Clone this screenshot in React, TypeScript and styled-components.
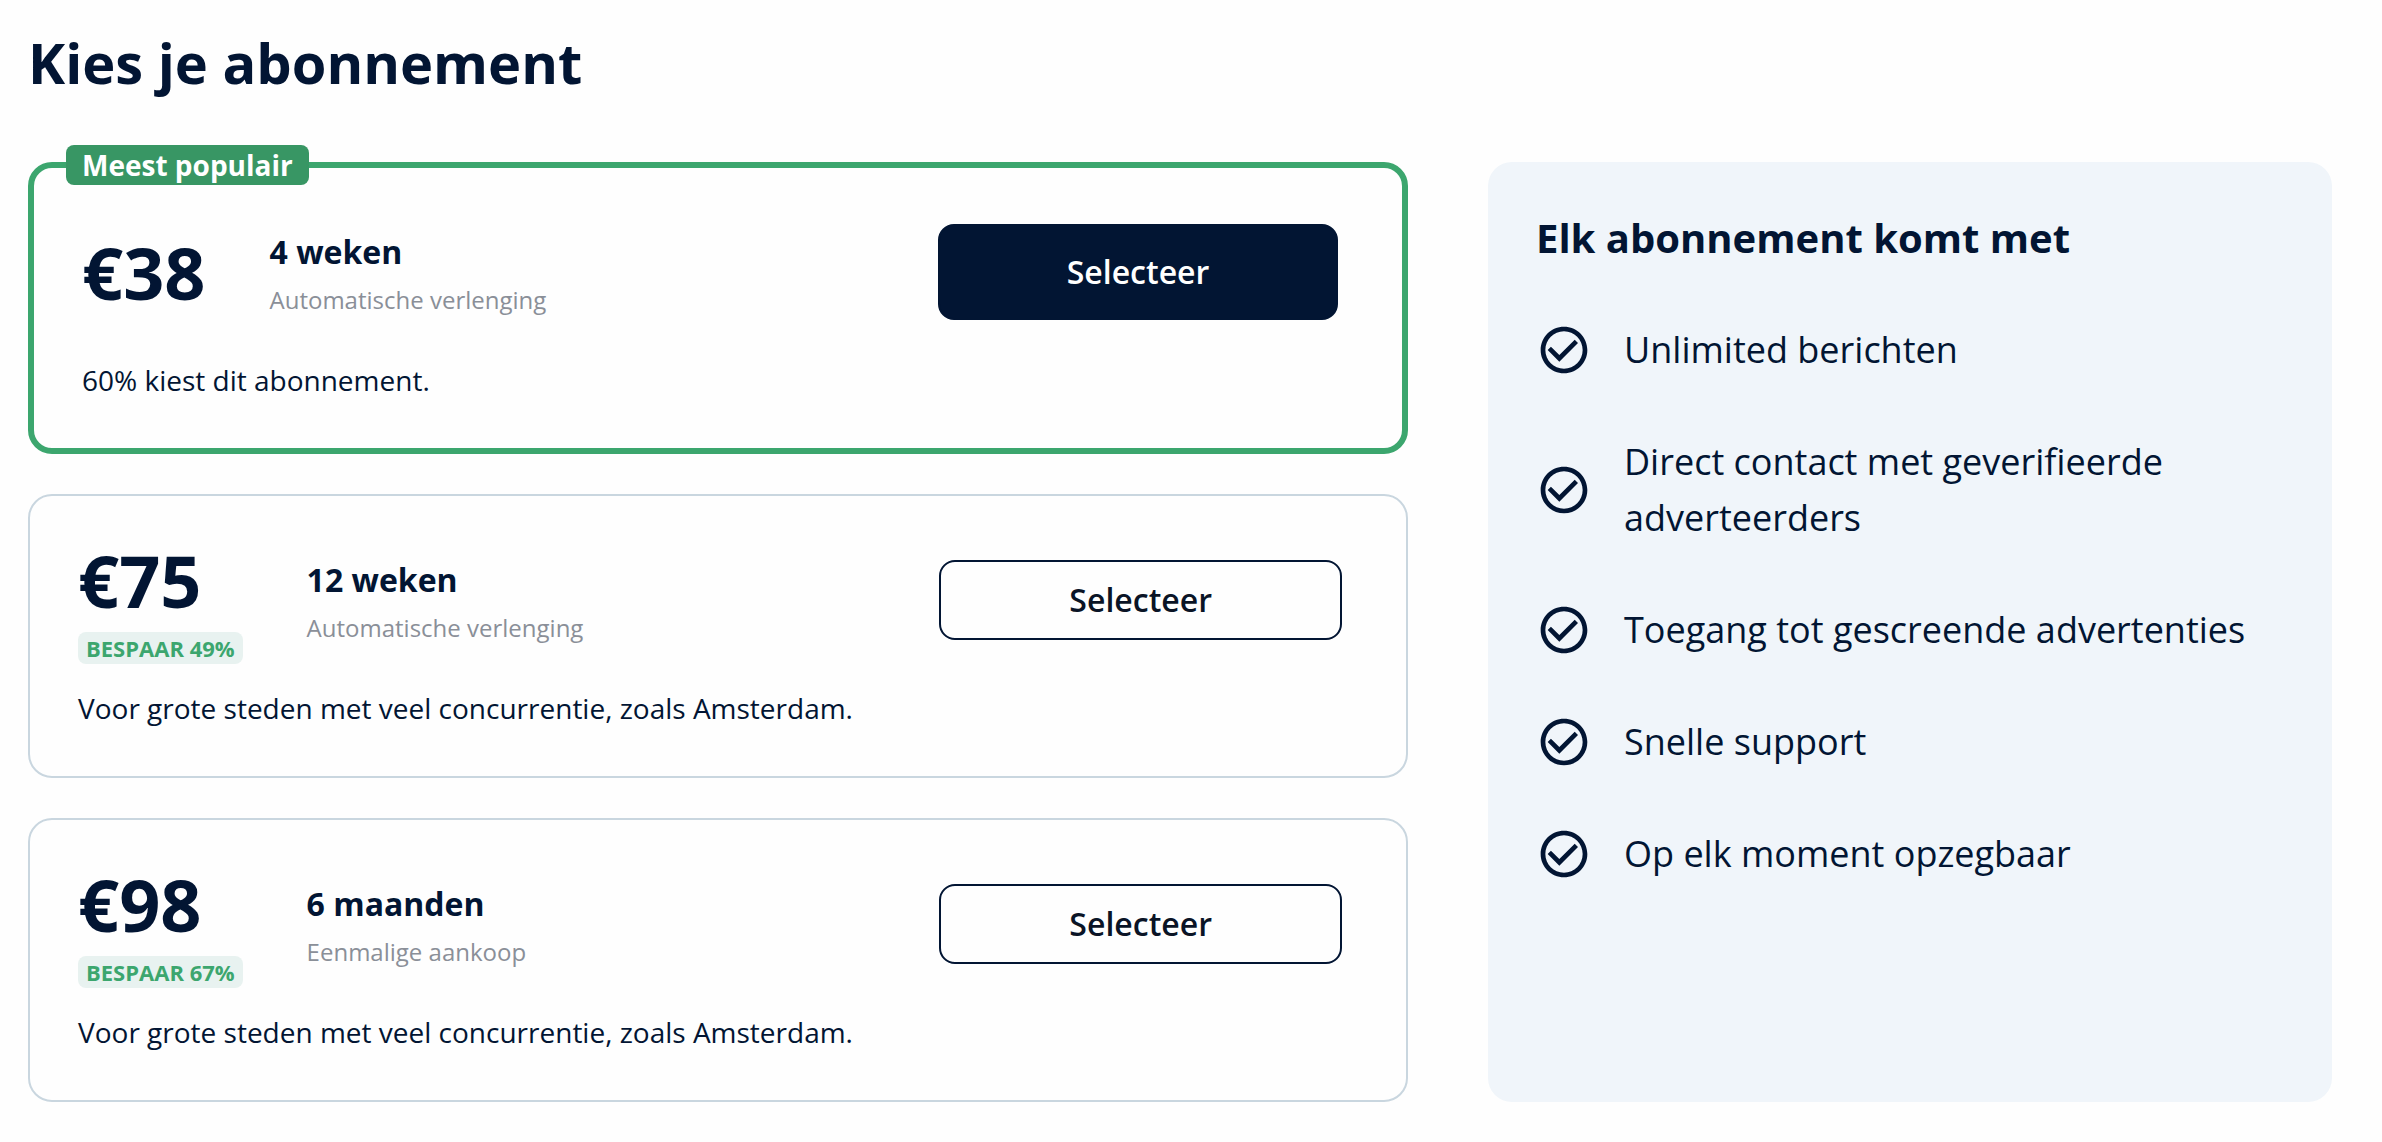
import React from "react";
import styled, { createGlobalStyle, css } from "styled-components";

const navy = "#021533";
const green = "#3ca66e";

const GlobalStyle = createGlobalStyle`
  *, *::before, *::after { box-sizing: border-box; }
  body {
    margin: 0;
    background: #fefefe;
    color: ${navy};
    font-family: "Open Sans", "Noto Sans", sans-serif;
  }
`;

const Page = styled.main`
  padding: 24px 50px 40px 28px;
`;

const Title = styled.h1`
  margin: 0 0 62px;
  font-size: 56px;
  line-height: 76px;
  font-weight: 700;
`;

const Columns = styled.div`
  display: grid;
  grid-template-columns: 345fr 211fr;
  gap: 80px;
`;

const Plans = styled.div`
  display: flex;
  flex-direction: column;
  gap: 40px;
`;

const Card = styled.article<{ $popular?: boolean }>`
  position: relative;
  display: flex;
  flex-direction: column;
  gap: 32px;
  padding: 48px;
  border: ${(p) => (p.$popular ? `6px solid ${green}` : "2px solid #c9d6df")};
  border-radius: 24px;
`;

const PopularBadge = styled.span`
  position: absolute;
  top: -23px;
  left: 32px;
  padding: 0 16px;
  border-radius: 8px;
  background: #389664;
  color: #fff;
  font-size: 28px;
  line-height: 40px;
  font-weight: 700;
`;

const Row = styled.div`
  display: grid;
  grid-template-columns: 2fr 1fr;
  align-items: center;
  min-height: 112px;
`;

const Offer = styled.div`
  display: flex;
  align-items: center;
  gap: 64px;
`;

const Cost = styled.div`
  display: flex;
  flex-direction: column;
  align-items: flex-start;
`;

const Price = styled.strong`
  font-size: 72px;
  line-height: 72px;
  font-weight: 700;
`;

const Saving = styled.span`
  margin: 16px 0 -8px;
  padding: 0 8px;
  border-radius: 8px;
  background: #e8f2f0;
  color: ${green};
  font-size: 22px;
  line-height: 32px;
  font-weight: 700;
  text-transform: uppercase;
`;

const Term = styled.div`
  display: flex;
  flex-direction: column;
  gap: 4px;
`;

const Period = styled.h2`
  margin: 0;
  font-size: 32px;
  line-height: 52px;
  font-weight: 700;
`;

const Renewal = styled.p`
  margin: 0;
  color: #8a8f98;
  font-size: 24px;
  line-height: 36px;
`;

const Action = styled.div`
  display: flex;
  padding: 0 16px 0 8px;
`;

const SelectButton = styled.button<{ $primary?: boolean }>`
  flex: 1;
  height: 80px;
  border: 2px solid ${navy};
  border-radius: 16px;
  background: transparent;
  color: #0a1426;
  font-family: "Open Sans", "Noto Sans", sans-serif;
  font-size: 32px;
  line-height: 48px;
  font-weight: 600;
  cursor: pointer;
  ${(p) =>
    p.$primary &&
    css`
      height: 96px;
      background: ${navy};
      color: #fff;
    `}
`;

const Note = styled.p`
  margin: 0;
  font-size: 28px;
  line-height: 40px;
`;

const Benefits = styled.aside`
  padding: 48px;
  border-radius: 24px;
  background: #f0f5fa;
`;

const BenefitsTitle = styled.h2`
  margin: 0 0 56px;
  font-size: 40px;
  line-height: 56px;
  font-weight: 700;
`;

const BenefitList = styled.ul`
  display: flex;
  flex-direction: column;
  gap: 56px;
  margin: 0;
  padding: 0;
  list-style: none;
`;

const Benefit = styled.li`
  display: flex;
  align-items: center;
  gap: 32px;
  font-size: 36px;
  line-height: 56px;
`;

const Icon = styled.svg`
  flex: none;
  width: 56px;
  height: 56px;
  fill: ${navy};
`;

const CheckIcon = () => (
  <Icon viewBox="0 0 24 24" aria-hidden="true">
    <path d="M16.59 7.58L10 14.17l-3.59-3.58L5 12l5 5 8-8zM12 2C6.48 2 2 6.48 2 12s4.48 10 10 10 10-4.48 10-10S17.52 2 12 2zm0 18c-4.42 0-8-3.58-8-8s3.58-8 8-8 8 3.58 8 8-3.58 8-8 8z" />
  </Icon>
);

interface Plan {
  price: string;
  period: string;
  renewal: string;
  note: string;
  saving?: string;
  popular?: boolean;
}

const plans: Plan[] = [
  {
    price: "€38",
    period: "4 weken",
    renewal: "Automatische verlenging",
    note: "60% kiest dit abonnement.",
    popular: true,
  },
  {
    price: "€75",
    period: "12 weken",
    renewal: "Automatische verlenging",
    note: "Voor grote steden met veel concurrentie, zoals Amsterdam.",
    saving: "Bespaar 49%",
  },
  {
    price: "€98",
    period: "6 maanden",
    renewal: "Eenmalige aankoop",
    note: "Voor grote steden met veel concurrentie, zoals Amsterdam.",
    saving: "Bespaar 67%",
  },
];

const benefits = [
  "Unlimited berichten",
  "Direct contact met geverifieerde adverteerders",
  "Toegang tot gescreende advertenties",
  "Snelle support",
  "Op elk moment opzegbaar",
];

const PlanCard = ({ plan }: { plan: Plan }) => (
  <Card $popular={plan.popular}>
    {plan.popular && <PopularBadge>Meest populair</PopularBadge>}
    <Row>
      <Offer>
        <Cost>
          <Price>{plan.price}</Price>
          {plan.saving && <Saving>{plan.saving}</Saving>}
        </Cost>
        <Term>
          <Period>{plan.period}</Period>
          <Renewal>{plan.renewal}</Renewal>
        </Term>
      </Offer>
      <Action>
        <SelectButton type="button" $primary={plan.popular}>
          Selecteer
        </SelectButton>
      </Action>
    </Row>
    <Note>{plan.note}</Note>
  </Card>
);

export default function App() {
  return (
    <>
      <GlobalStyle />
      <Page>
        <Title>Kies je abonnement</Title>
        <Columns>
          <Plans>
            {plans.map((plan) => (
              <PlanCard key={plan.price} plan={plan} />
            ))}
          </Plans>
          <Benefits>
            <BenefitsTitle>Elk abonnement komt met</BenefitsTitle>
            <BenefitList>
              {benefits.map((benefit) => (
                <Benefit key={benefit}>
                  <CheckIcon />
                  <span>{benefit}</span>
                </Benefit>
              ))}
            </BenefitList>
          </Benefits>
        </Columns>
      </Page>
    </>
  );
}
